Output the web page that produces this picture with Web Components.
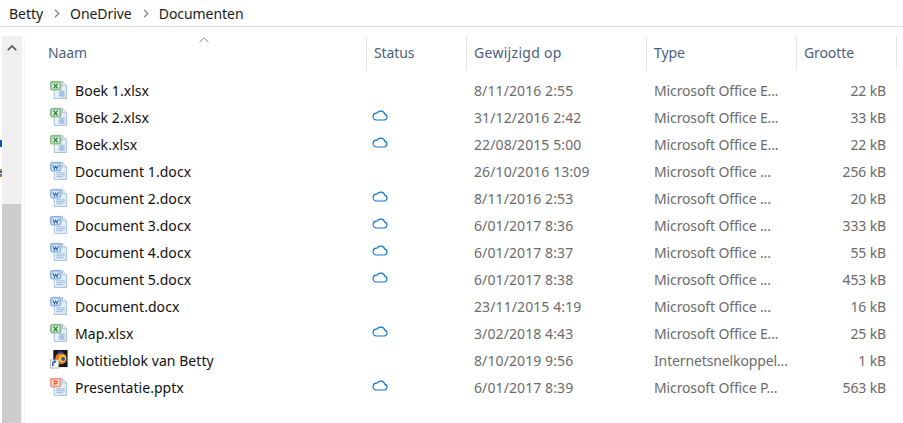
<!DOCTYPE html>
<html>
<head>
<meta charset="utf-8">
<title>Documenten</title>
<style>
html, body { margin: 0; height: 100%; background: #fff; overflow: hidden; }
body { font: 14px "Noto Sans", sans-serif; color: #000; }
</style>
</head>
<body>
<explorer-window>
	<crumb-bar>
		<span>Betty</span>
		<span>OneDrive</span>
		<span>Documenten</span>
	</crumb-bar>
	<file-list>
		<file-row kind="xlsx" name="Boek 1.xlsx" date="8/11/2016 2:55" type="Microsoft Office E..." size="22 kB"></file-row>
		<file-row kind="xlsx" name="Boek 2.xlsx" cloud date="31/12/2016 2:42" type="Microsoft Office E..." size="33 kB"></file-row>
		<file-row kind="xlsx" name="Boek.xlsx" cloud date="22/08/2015 5:00" type="Microsoft Office E..." size="22 kB"></file-row>
		<file-row kind="docx" name="Document 1.docx" date="26/10/2016 13:09" type="Microsoft Office ..." size="256 kB"></file-row>
		<file-row kind="docx" name="Document 2.docx" cloud date="8/11/2016 2:53" type="Microsoft Office ..." size="20 kB"></file-row>
		<file-row kind="docx" name="Document 3.docx" cloud date="6/01/2017 8:36" type="Microsoft Office ..." size="333 kB"></file-row>
		<file-row kind="docx" name="Document 4.docx" cloud date="6/01/2017 8:37" type="Microsoft Office ..." size="55 kB"></file-row>
		<file-row kind="docx" name="Document 5.docx" cloud date="6/01/2017 8:38" type="Microsoft Office ..." size="453 kB"></file-row>
		<file-row kind="docx" name="Document.docx" date="23/11/2015 4:19" type="Microsoft Office ..." size="16 kB"></file-row>
		<file-row kind="xlsx" name="Map.xlsx" cloud date="3/02/2018 4:43" type="Microsoft Office E..." size="25 kB"></file-row>
		<file-row kind="link" name="Notitieblok van Betty" date="8/10/2019 9:56" type="Internetsnelkoppel..." size="1 kB"></file-row>
		<file-row kind="pptx" name="Presentatie.pptx" cloud date="6/01/2017 8:39" type="Microsoft Office P..." size="563 kB"></file-row>
	</file-list>
</explorer-window>

<script>
// ---- window shell ----
class ExplorerWindow extends HTMLElement {
	connectedCallback() {
		const SHADOW = this.attachShadow({mode: 'open'});
		SHADOW.innerHTML = `
		<style>
			:host { display: flex; flex-direction: column; height: 423px; width: 903px; overflow: hidden; }
			.body { display: flex; flex: 1; min-height: 0; padding-top: 9px; }
			.rail { width: 2px; flex: none; display: flex; flex-direction: column; padding-top: 104px; }
			.mark1 { height: 7px; background: #0a5cb0; }
			.mark2 { height: 8px; margin-top: 22px; background: linear-gradient(#d08a20 0 2px, #1a6fc0 2px 4px, #e8eef5 4px 5px, #1a6fc0 5px 6px, #c07a18 6px); }
			.bar { width: 20px; flex: none; background: #f0f0f0; display: flex; flex-direction: column; }
			.up { height: 32px; display: flex; justify-content: center; padding-top: 9px; box-sizing: border-box; flex: none; }
			.track { flex: 1; }
			.thumb { height: 219px; width: 19px; background: #cdcdcd; flex: none; }
			.gap { width: 2px; flex: none; }
			.line { width: 1px; flex: none; background: #f6f6f6; }
			.main { flex: 1; min-width: 0; }
		</style>
		<slot name="top"></slot>
		<div class="body">
			<div class="rail"><div class="mark1"></div><div class="mark2"></div></div>
			<div class="bar">
				<div class="up"><svg width="10" height="6" viewBox="0 0 10 6"><path d="M.7 5.3 5 1l4.3 4.3" fill="none" stroke="#505050" stroke-width="1.6"/></svg></div>
				<div class="track"></div>
				<div class="thumb"></div>
			</div>
			<div class="gap"></div>
			<div class="line"></div>
			<div class="main"><slot></slot></div>
		</div>`;
		this.querySelector('crumb-bar').slot = 'top';
	}
}

// ---- breadcrumb ----
class CrumbBar extends HTMLElement {
	connectedCallback() {
		const SHADOW = this.attachShadow({mode: 'open'});
		SHADOW.innerHTML = `
		<style>
			:host { display: block; height: 27px; box-sizing: border-box; border-bottom: 1px solid #d9d9d9; }
			.wrap { display: flex; align-items: center; height: 26px; padding-left: 9px; font: 14px "Noto Sans", sans-serif; color: #1a1a1a; letter-spacing: -.05px; }
			svg { margin: 0 10px 0 11px; flex: none; }
			::slotted(span) { display: block; }
		</style>
		<div class="wrap"></div>`;
		const wrap = SHADOW.querySelector('.wrap');
		const chevron = '<svg width="6" height="9" viewBox="0 0 6 9"><path d="M1 .8 4.7 4.5 1 8.2" fill="none" stroke="#8a8a8a" stroke-width="1.4"/></svg>';
		[...this.children].forEach((child, index) => {
			child.slot = `c${index}`;
			if (index > 0) wrap.insertAdjacentHTML('beforeend', chevron);
			wrap.insertAdjacentHTML('beforeend', `<slot name="c${index}"></slot>`);
		});
	}
}

// ---- list with column header ----
class FileList extends HTMLElement {
	connectedCallback() {
		const SHADOW = this.attachShadow({mode: 'open'});
		SHADOW.innerHTML = `
		<style>
			:host { display: block; }
			.head { display: grid; grid-template-columns: 342px 100px 180px 150px 100px; height: 32px; position: relative; }
			.col { border-right: 1px solid #e5e5e5; padding-left: 7px; font: 14px/34px "Noto Sans", sans-serif; color: #4c607a; letter-spacing: -.1px; box-sizing: border-box; }
			.col:first-child { padding-left: 23px; }
			.date { letter-spacing: .3px; }
			.sort { position: absolute; left: 174px; top: 1px; }
			.rows { padding-top: 9px; }
		</style>
		<div class="head">
			<div class="col">Naam</div>
			<div class="col">Status</div>
			<div class="col date">Gewijzigd op</div>
			<div class="col">Type</div>
			<div class="col">Grootte</div>
			<svg class="sort" width="10" height="6" viewBox="0 0 10 6"><path d="M.5 5.2 5 .8l4.5 4.4" fill="none" stroke="#8c8c8c"/></svg>
		</div>
		<div class="rows"><slot></slot></div>`;
	}
}

// ---- file type icons ----
const PAGE_DEFS = `<defs><linearGradient id="pg" x1="0" y1="0" x2="1" y2="1"><stop offset="0" stop-color="#fbfdff"/><stop offset="1" stop-color="#d6e4f3"/></linearGradient></defs>`;
function pageIcon(lines) {
	return `${PAGE_DEFS}<path d="M4.5 1.5h8.5l4.5 4.5v13.5h-13z" fill="url(#pg)" stroke="#a9bed6"/>
		<path d="M13 1.5v4.5h4.5" fill="#e6eef7" stroke="#a9bed6"/>${lines}`;
}
const FILE_ICONS = {
	xlsx: pageIcon(`<path d="M9 12.5h6.5M9 14.5h6.5M9 16.5h6.5M11.5 11v7M13.5 11v7" stroke="#93b5d8"/>`) +
		`<rect x=".5" y="1.5" width="11" height="9" rx="1.5" fill="#9ccb98" stroke="#7fb583"/>
		<rect x="2.5" y="3.5" width="7" height="5.5" fill="#f1f7ef"/>
		<path d="M3.8 4 8 8.6M8 4 3.8 8.6" stroke="#2f8444" stroke-width="1.5"/>`,
	docx: pageIcon(`<path d="M6.5 12.5h9M6.5 14.5h9M6.5 16.5h7" stroke="#93b5d8"/>`) +
		`<rect x=".5" y="1.5" width="11" height="9" rx="1.5" fill="#a9c9ec" stroke="#86afdd"/>
		<rect x="2.5" y="3.5" width="7" height="5.5" fill="#f3f8fd"/>
		<path d="M3.2 4.2 4.6 8.4 6 5.2 7.4 8.4 8.8 4.2" fill="none" stroke="#2f6db3" stroke-width="1.1"/>`,
	pptx: pageIcon(`<path d="M6.5 12.5h9M6.5 14.5h9M6.5 16.5h7" stroke="#93b5d8"/>`) +
		`<rect x=".5" y="1.5" width="11" height="9" rx="1.5" fill="#f3aa96" stroke="#eb9782"/>
		<rect x="2.5" y="3.5" width="7" height="5.5" fill="#fdeee9"/>
		<path d="M4.6 8.6V4.3h1.8a1.3 1.3 0 0 1 0 2.6H4.6" fill="none" stroke="#dc5a3a" stroke-width="1.3"/>`,
	link: `<rect x="3.5" y="0" width="15" height="18" fill="#14161f"/>
		<circle cx="11.5" cy="9" r="6" fill="#e8791a"/>
		<circle cx="13" cy="9" r="4" fill="#f4c42a"/>
		<circle cx="13.8" cy="9.5" r="2.1" fill="#3a4fb0"/>
		<path d="M8 1.5h6v2.2H8z" fill="#2f3f9c"/>
		<rect x=".5" y="10.5" width="8.5" height="8.5" fill="#fff" stroke="#b5b5b5"/>
		<path d="M3 17v-2.8c0-1.2.8-1.8 2-1.8" fill="none" stroke="#1f5fb0" stroke-width="1.6"/>
		<path d="M4.4 10.6 7.2 12.4 4.4 14.2z" fill="#1f5fb0"/>`
};

// ---- one row ----
class FileRow extends HTMLElement {
	connectedCallback() {
		const SHADOW = this.attachShadow({mode: 'open'});
		const cloud = this.hasAttribute('cloud')
			? `<svg width="16" height="11" viewBox="0 0 16 11"><path d="M4 10h8.2a3 3 0 0 0 .5-5.9A4.2 4.2 0 0 0 5 3.2 3.4 3.4 0 0 0 4 10z" fill="#fff" stroke="#0f78d4" stroke-width="1.2"/></svg>`
			: '';
		SHADOW.innerHTML = `
		<style>
			:host { display: grid; grid-template-columns: 342px 100px 180px 150px 89px; height: 27px; align-items: center; font: 14px "Noto Sans", sans-serif; letter-spacing: -.13px; }
			.name { display: flex; align-items: center; padding-left: 25px; gap: 6px; color: #111; white-space: nowrap; letter-spacing: .05px; }
			.name svg { flex: none; margin-top: -3px; }
			.status { padding-left: 5px; display: flex; margin-top: -5px; }
			.date, .type, .size { color: #6b6b6b; white-space: nowrap; }
			.date { letter-spacing: .1px; }
			.date, .type { padding-left: 7px; }
			.size { text-align: right; }
		</style>
		<div class="name"><svg width="19" height="19" viewBox="0 0 20 20">${FILE_ICONS[this.getAttribute('kind')]}</svg><span>${this.getAttribute('name')}</span></div>
		<div class="status">${cloud}</div>
		<div class="date">${this.getAttribute('date')}</div>
		<div class="type">${this.getAttribute('type')}</div>
		<div class="size">${this.getAttribute('size')}</div>`;
	}
}

window.customElements.define('explorer-window', ExplorerWindow);
window.customElements.define('crumb-bar', CrumbBar);
window.customElements.define('file-list', FileList);
window.customElements.define('file-row', FileRow);
</script>
</body>
</html>
